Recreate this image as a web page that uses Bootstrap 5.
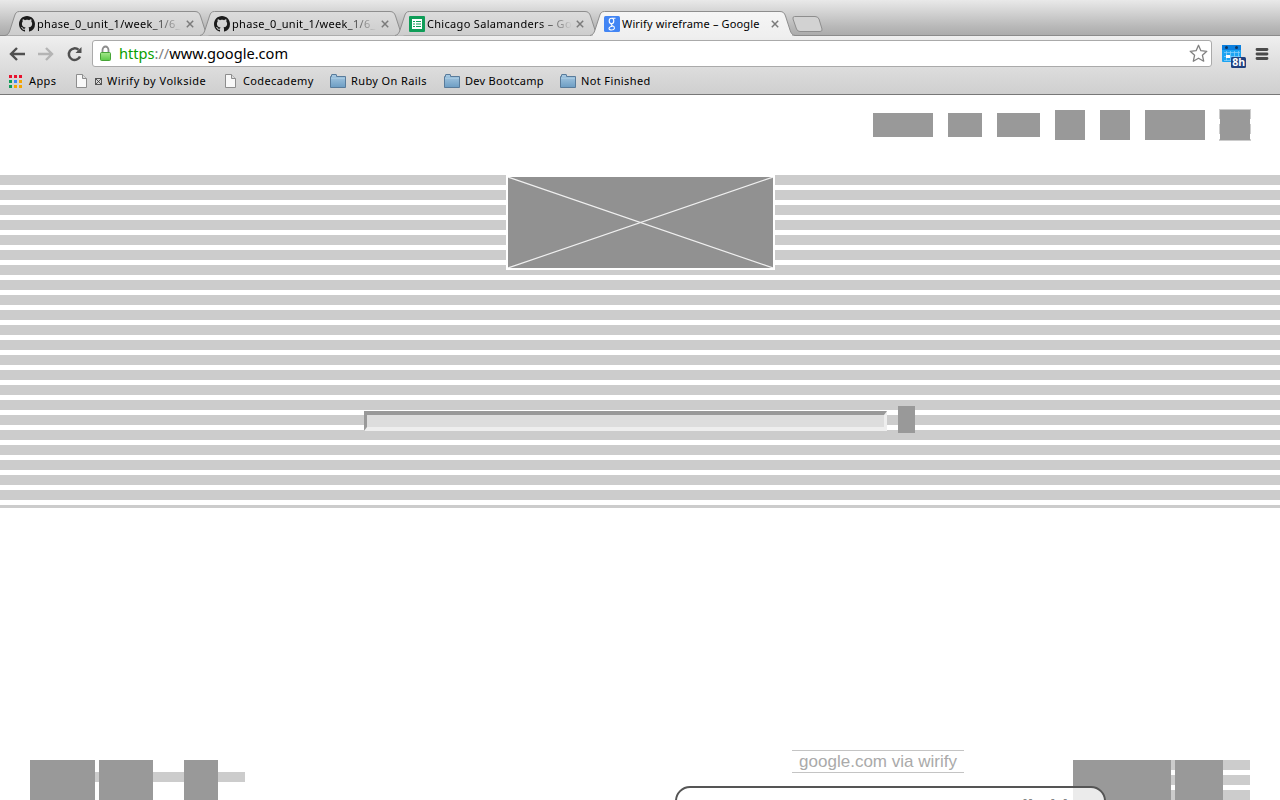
<!DOCTYPE html>
<html lang="en">
<head>
<meta charset="utf-8">
<title>Wirify wireframe – Google</title>
<link href="https://cdn.jsdelivr.net/npm/bootstrap@5.3.0/dist/css/bootstrap.min.css" rel="stylesheet">
<style>
body{font-family:"Noto Sans","Open Sans",sans-serif;font-size:11px;color:#000;background:#fff}
.strip{height:36px;background:linear-gradient(#e9e9e9,#d6d6d6 30%,#b9b9b9 75%,#acacac);border-bottom:1px solid #8b8b8b;padding:11px 0 0 5px}
.tab{width:195px;height:25px;padding-left:14px}
.tab>.shape{left:0;top:0;z-index:0}
.tab.front{z-index:2}
.tab>.ico{width:16px;height:16px;margin-top:5px;z-index:1}
.tab>.ttl{width:147px;margin:0 -5px 0 2px;line-height:25px;white-space:nowrap;z-index:1;letter-spacing:.31px}
.fade-end{-webkit-mask-image:linear-gradient(90deg,#000 112px,transparent 145px);mask-image:linear-gradient(90deg,#000 112px,transparent 145px)}
.tab>.cls{margin:9px 0 0 7px;z-index:1}
.tools{height:59px;background:linear-gradient(#efefef,#dedede 50%,#cfcfcf);border-bottom:1px solid #777}
.omni{width:1120px;height:27px;border:1px solid #aaa;border-radius:3px;background:#fff;margin-left:8px;padding:0 3px 0 6px;font-size:14.6px}
.marks{height:28px;padding-left:9px;letter-spacing:.38px}
.marks span{white-space:pre}
.g{background:#999}
.h24{height:24px}.h30{height:30px}
.topnav{height:80px;padding:15px 30px 0 0}
.blocks{gap:15px}
.stripes{background:repeating-linear-gradient(#ccc 0 10px,#fff 10px 15px)}
.framed{width:32px;height:32px;margin:-1px;padding:1px;background:linear-gradient(#ccc 0 10px,#fff 10px 15px,#ccc 15px 25px,#fff 25px 30px,#ccc 30px)}
.hero{height:333px}
.pic{width:269px;height:95px;border:2px solid #fff;background:#919191;margin-left:506px}
.pic svg{display:block}
.search{margin:136px 0 0 364px}
.field{width:523px;height:20px;margin:5px 11px 0 0;background:#ddd;border-style:solid;border-width:4px 3px;border-color:#999 #eee #eee #999}
.go{width:17px;height:27px}
.foot{height:40px;padding:0 30px}
.bar{height:10px;margin-top:12px;background:#ccc}
.via{left:792px;top:750px;width:172px;height:23px;border:solid #c4c4c4;border-width:1px 0;font:17px/21px "Liberation Sans",Arial,sans-serif;color:#aaa;text-align:center;white-space:nowrap}
.dlg{left:675px;top:786px;width:431px;height:60px;border:2px solid #555;border-radius:15px;background:rgba(255,255,255,.8);font:bold 20px/20px "Liberation Sans",Arial,sans-serif;color:#888;padding:9px 25px 0 0;text-align:right}
</style>
</head>
<body class="overflow-hidden">
<svg width="0" height="0" class="position-absolute">
<defs>
<linearGradient id="tb" x1="0" y1="0" x2="0" y2="1"><stop offset="0" stop-color="#dcdcdc"/><stop offset="1" stop-color="#cdcdcd"/></linearGradient>
<linearGradient id="ta" x1="0" y1="0" x2="0" y2="1"><stop offset="0" stop-color="#f6f6f6"/><stop offset="1" stop-color="#efefef"/></linearGradient>
<linearGradient id="fb" x1="0" y1="0" x2="0" y2="1"><stop offset="0" stop-color="#a9cbe4"/><stop offset="1" stop-color="#6d9dc3"/></linearGradient>
<linearGradient id="lk" x1="0" y1="0" x2="0" y2="1"><stop offset="0" stop-color="#a5e78c"/><stop offset="1" stop-color="#5cc947"/></linearGradient>
<path id="edge" d="M0 24.5C3 24 4 22 5 19L9.500 5C10.500 2 11.500.5 14.500.5H190C193 .5 194.500 2 195.500 5L200 19C201 22 202 24 205 24.500"/>
<symbol id="cat" viewBox="0 0 16 16"><path fill="#1b1b1b" d="M8 0C3.580 0 0 3.580 0 8c0 3.540 2.290 6.530 5.470 7.590.4.070.55-.17.55-.38 0-.19-.010-.82-.010-1.490-2.010.37-2.530-.49-2.690-.94-.09-.23-.48-.94-.82-1.130-.28-.15-.68-.52-.010-.53.63-.010 1.080.58 1.230.82.72 1.210 1.870.87 2.330.66.070-.52.28-.87.510-1.070-1.780-.2-3.640-.89-3.640-3.950 0-.87.310-1.590.82-2.150-.08-.2-.36-1.020.08-2.120 0 0 .67-.210 2.200.82.640-.180 1.320-.270 2-.270s1.360.090 2 .270c1.530-1.040 2.200-.820 2.200-.820.440 1.100.160 1.920.080 2.120.510.560.820 1.270.820 2.150 0 3.070-1.870 3.750-3.650 3.950.290.250.540.730.540 1.480 0 1.070-.010 1.930-.010 2.200 0 .210.150.460.550.380A8.010 8.010 0 0 0 16 8c0-4.420-3.580-8-8-8z"/></symbol>
<symbol id="x" viewBox="0 0 8 8"><path d="M.8.8l6.400 6.400M7.200.8L.8 7.200" stroke="#7b7b7b" stroke-width="1.500"/></symbol>
<symbol id="page" viewBox="0 0 11 14"><path d="M.5.5h6l4 4v9H.5z" fill="#f8f8f8" stroke="#8d8d8d"/><path d="M6.500.5v4h4" fill="#ddd" stroke="#8d8d8d"/></symbol>
<symbol id="dir" viewBox="0 0 16 14"><path d="M.5 13.500V2.500H1.500V1Q1.500.5 2 .5H6Q6.500.5 6.500 1V2.500H15.500V13.500z" fill="url(#fb)" stroke="#587b9b"/><path d="M1 4.500H15" stroke="#a5c8e0"/></symbol>
</defs>
</svg>

<div class="d-flex flex-column vh-100 position-relative overflow-hidden">
<header>
<div class="strip d-flex">
  <div class="tab d-flex position-relative flex-shrink-0">
    <svg class="shape position-absolute" width="207" height="25"><use href="#edge" fill="url(#tb)" stroke="#8e8e8e"/></svg>
    <svg class="ico position-relative"><use href="#cat"/></svg><div class="ttl fade-end position-relative">phase_0_unit_1/week_1/6_</div>
    <svg class="cls position-relative" width="8" height="8"><use href="#x"/></svg>
  </div>
  <div class="tab d-flex position-relative flex-shrink-0">
    <svg class="shape position-absolute" width="207" height="25"><use href="#edge" fill="url(#tb)" stroke="#8e8e8e"/></svg>
    <svg class="ico position-relative"><use href="#cat"/></svg><div class="ttl fade-end position-relative">phase_0_unit_1/week_1/6_</div>
    <svg class="cls position-relative" width="8" height="8"><use href="#x"/></svg>
  </div>
  <div class="tab d-flex position-relative flex-shrink-0">
    <svg class="shape position-absolute" width="207" height="25"><use href="#edge" fill="url(#tb)" stroke="#8e8e8e"/></svg>
    <svg class="ico position-relative" viewBox="0 0 16 16"><rect width="16" height="16" rx="1" fill="#0f9d58"/><path d="M3 3h10v10H3z" fill="#fff"/><path d="M4 5.500h2M7 5.500h5M4 8h2M7 8h5M4 10.500h2M7 10.500h5" stroke="#0f9d58" stroke-width="1.200"/></svg><div class="ttl fade-end position-relative">Chicago Salamanders – Go</div>
    <svg class="cls position-relative" width="8" height="8"><use href="#x"/></svg>
  </div>
  <div class="tab front d-flex position-relative flex-shrink-0">
    <svg class="shape position-absolute" width="207" height="26"><use href="#edge" fill="url(#ta)" stroke="#8e8e8e"/><path d="M3 24.500H202" stroke="#efefef" stroke-width="2"/></svg>
    <svg class="ico position-relative" viewBox="0 0 16 16"><rect width="16" height="16" rx="1.500" fill="#4285f4"/><g fill="none" stroke="#fff" stroke-width="1.100"><ellipse cx="7.500" cy="5" rx="2.300" ry="2.700"/><path d="M8 2.300h3.500M9 7.500C6.500 8 6.800 9 8.500 9.800 11.500 11 11 14 7.500 14S4 10.800 8.500 10.200"/></g></svg><div class="ttl position-relative" style="letter-spacing:.15px">Wirify wireframe – Google</div>
    <svg class="cls position-relative" width="8" height="8"><use href="#x"/></svg>
  </div>
  <svg class="flex-shrink-0" style="margin:4px 0 0 6px" width="36" height="18"><path d="M3.500 1.500H24Q27 1.500 28 4L31 14Q31.500 16.500 29 16.500H9Q6.500 16.500 5.500 14L2 4Q1.500 1.500 3.500 1.500z" fill="#d2d2d2" stroke="#8e8e8e"/></svg>
</div>
<div class="tools">
  <div class="d-flex align-items-center" style="padding:4px 0 0 9px">
    <svg width="17" height="16" fill="none" stroke="#505050" stroke-width="2.400"><path d="M2 8H16M8 2L2 8l6 6"/></svg>
    <svg width="17" height="16" fill="none" stroke="#b4b4b4" stroke-width="2.400" style="margin-left:11px"><path d="M1 8H15M9 2l6 6-6 6"/></svg>
    <svg width="18" height="18" style="margin-left:12px"><path d="M14 11.500A5.800 5.800 0 1 1 12.500 4.800" fill="none" stroke="#505050" stroke-width="2.500"/><path d="M15.500 2V8H9.500z" fill="#505050"/></svg>
    <div class="omni d-flex align-items-center">
      <svg width="13" height="17"><path d="M3.500 8V5a3 3.500 0 0 1 6 0v3" fill="none" stroke="#8d8d8d" stroke-width="1.800"/><rect x="1.500" y="7.500" width="10" height="8" rx="1" fill="url(#lk)" stroke="#46a436"/></svg>
      <div class="flex-grow-1" style="margin-left:7px"><span style="color:#0a9f00">https</span><span style="color:#808080">://</span>www.google.com</div>
      <svg width="19" height="19"><path d="M9.500 1.300L11.900 6.700 17.800 7.300 13.400 11.200 14.700 17.200 9.500 14.200 4.300 17.200 5.600 11.200 1.200 7.300 7.100 6.700z" fill="#fff" stroke="#808080" stroke-width="1.300" stroke-linejoin="round"/></svg>
    </div>
    <svg width="26" height="25" style="margin:2px 0 -2px 9px"><rect x="1" y="2" width="19" height="17" rx="1" fill="#1ba4f2"/><rect x="1" y="2" width="19" height="5" fill="#0b80df"/><circle cx="5.500" cy="4.500" r="1.500" fill="#103560"/><circle cx="15.500" cy="4.500" r="1.500" fill="#103560"/><path d="M3 9.500H19M3 13.500H19M3 17.500H10M5.500 8V18M9.500 8V18M13.500 8V14M17.500 8V14" stroke="#8fd2fa" stroke-width=".7"/><rect x="5" y="12" width="4" height="3" fill="#fff"/><rect x="10" y="14" width="15" height="11" rx="1.500" fill="#21417e"/><text x="11.200" y="23.200" font-family="Open Sans" font-weight="700" font-size="10.500" fill="#fff">8h</text></svg>
    <svg width="14" height="14" style="margin-left:8px"><path d="M2 2.500H12M2 7H12M2 11.500H12" stroke="#4b4b4b" stroke-width="2.800" stroke-linecap="round"/></svg>
  </div>
  <div class="marks d-flex align-items-center">
    <svg width="13" height="13"><path d="M0 0h3v3H0zM5 0h3v3H5zM10 0h3v3h-3z" fill="#e8112d"/><path d="M0 5h3v3H0zM0 10h3v3H0z" fill="#0f9d58"/><path d="M5 5h3v3H5z" fill="#3b86f6"/><path d="M10 5h3v3h-3zM5 10h3v3H5zM10 10h3v3h-3z" fill="#f5a400"/></svg>
    <span style="width:41px;margin:0 6px 0 7px">Apps</span>
    <svg width="11" height="14"><use href="#page"/></svg>
    <svg width="7" height="7" style="margin:0 5px 0 8px" fill="none" stroke="#333"><path d="M.5.5h6v6h-6zM.5.5l6 6M6.500.5l-6 6" stroke-width=".8"/></svg>
    <span style="width:118px;letter-spacing:.48px">Wirify by Volkside</span>
    <svg width="11" height="14"><use href="#page"/></svg>
    <span style="margin-left:7px;width:87px">Codecademy</span>
    <svg width="16" height="14"><use href="#dir"/></svg>
    <span style="margin-left:5px;width:93px">Ruby On Rails</span>
    <svg width="16" height="14"><use href="#dir"/></svg>
    <span style="margin-left:5px;width:95px;letter-spacing:.28px">Dev Bootcamp</span>
    <svg width="16" height="14"><use href="#dir"/></svg>
    <span style="margin-left:5px">Not Finished</span>
  </div>
</div>
</header>

<main class="flex-grow-1 d-flex flex-column">
  <nav class="topnav d-flex justify-content-end">
    <div class="blocks d-flex align-items-center h30">
      <div class="g h24" style="width:60px"></div><div class="g h24" style="width:34px"></div><div class="g h24" style="width:43px"></div>
      <div class="g h30" style="width:30px"></div><div class="g h30" style="width:30px"></div><div class="g h30" style="width:60px"></div>
      <div class="framed"><div class="g h30"></div></div>
    </div>
  </nav>
  <section class="hero stripes">
    <div class="pic"><svg width="265" height="91"><path d="M0 0L265 91M265 0L0 91" stroke="#f0f0f0" stroke-width="1.200"/></svg></div>
    <div class="search d-flex"><div class="field"></div><div class="g go"></div></div>
  </section>
  <footer class="foot d-flex mt-auto">
    <div class="g h-100" style="width:65px"></div><div class="bar" style="width:4px"></div><div class="g h-100" style="width:54px"></div><div class="bar" style="width:31px"></div><div class="g h-100" style="width:34px"></div><div class="bar" style="width:27px"></div>
    <div class="stripes d-flex ms-auto" style="width:177px;gap:4px"><div class="g" style="width:98px"></div><div class="g" style="width:48px"></div></div>
  </footer>
</main>
<div class="via position-absolute">google.com via wirify</div>
<div class="dlg position-absolute">Volkside</div>
</div>
<script src="https://cdn.jsdelivr.net/npm/bootstrap@5.3.0/dist/js/bootstrap.bundle.min.js"></script>
</body>
</html>
